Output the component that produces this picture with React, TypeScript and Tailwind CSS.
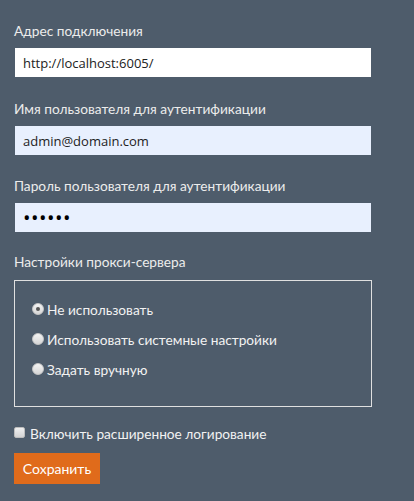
import { useState } from "react";

const label = "block text-[13.7px] leading-[17px] text-[#ececec]";
const field =
  "block w-[356px] h-[29px] px-2 text-[13px] text-[#222] outline-none font-['Open_Sans',sans-serif]";

function Radio({ checked, text }: { checked?: boolean; text: string }) {
  return (
    <label className="flex items-center h-[30px] text-[13.7px] text-[#f2f2f2]">
      <span className="relative mr-[3px] -mt-[3px] w-[12px] h-[12px] rounded-full bg-gradient-to-b from-[#f4f4f4] to-[#d6d6d6] border border-[#c8c8c8]">
        {checked && (
          <span className="absolute left-[3px] top-[3px] w-[4px] h-[4px] rounded-full bg-[#555]" />
        )}
      </span>
      {text}
    </label>
  );
}

export default function App() {
  const [logging, setLogging] = useState(false);

  return (
    <div className="min-h-[501px] w-[414px] bg-[#4e5c6b] px-[14px] pt-[22px] font-['Lato',sans-serif]">
      <div className={label}>Адрес подключения</div>
      <input
        className={`${field} mt-[9px] ml-px bg-white`}
        defaultValue="http://localhost:6005/"
      />

      <div className={`${label} mt-[23px]`}>Имя пользователя для аутентификации</div>
      <input
        className={`${field} mt-[9px] ml-px bg-[#e8f0fe]`}
        defaultValue="admin@domain.com"
      />

      <div className={`${label} mt-[22px]`}>Пароль пользователя для аутентификации</div>
      <input
        type="password"
        className={`${field} mt-[9px] ml-px bg-[#e8f0fe] !text-[20px] !text-black tracking-[0.5px]`}
        defaultValue="123456"
      />

      <div className={`${label} mt-[21px]`}>Настройки прокси-сервера</div>
      <div className="mt-[10px] w-[358px] h-[127px] border border-[#e0e0e0] pl-[17px] pt-[14px]">
        <Radio checked text="Не использовать" />
        <Radio text="Использовать системные настройки" />
        <Radio text="Задать вручную" />
      </div>

      <label className="mt-[17px] flex items-center text-[13.7px] text-[#f2f2f2]">
        <span
          onClick={() => setLogging(!logging)}
          className="mr-[5px] -mt-[4px] w-[11px] h-[11px] rounded-[2px] bg-gradient-to-b from-[#f0f0f0] to-[#d4d4d4] border border-[#bdbdbd]"
        />
        Включить расширенное логирование
      </label>

      <button className="mt-[8px] h-[31px] w-[86px] bg-[#e06b1b] text-[14px] text-white">
        Сохранить
      </button>
    </div>
  );
}
